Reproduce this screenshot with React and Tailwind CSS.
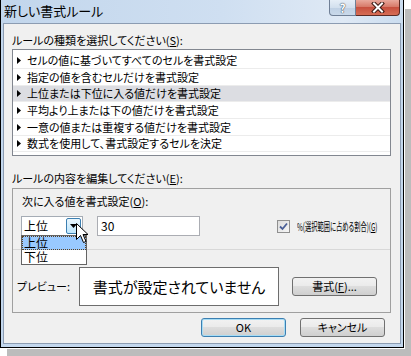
const rules = [
  { text: 'セルの値に基づいてすべてのセルを書式設定', h: 'h-[17px]', on: false },
  { text: '指定の値を含むセルだけを書式設定', h: 'h-[17px]', on: false },
  { text: '上位または下位に入る値だけを書式設定', h: 'h-[16px]', on: true },
  { text: '平均より上または下の値だけを書式設定', h: 'h-[17px]', on: false },
  { text: '一意の値または重複する値だけを書式設定', h: 'h-[17px]', on: false },
  { text: '数式を使用して、書式設定するセルを決定', h: 'h-[16px]', on: false },
];

const btn =
  'h-[19px] w-[85px] shrink-0 rounded-[3px] border flex items-center justify-center text-[11px] leading-none bg-[linear-gradient(#f2f2f2_0%,#ebebeb_45%,#dddddd_50%,#cfcfcf_100%)]';

function TitleBar() {
  return (
    <div className="h-[23px] flex justify-between items-start bg-[linear-gradient(90deg,#c2d6ec_0%,#cfdff1_55%,#dfe9f5_85%,#cadcef_100%)]">
      <div className="pl-[3px] pt-[3px] text-[13px] leading-[16px]">新しい書式ルール</div>
      <div className="flex mr-[3px]">
        <div className="w-[27px] h-[16px] border border-t-0 border-[#6f7f96] rounded-bl-[4px] bg-[linear-gradient(#e6eef7_0%,#d3e0ee_50%,#bfd0e4_51%,#c9d9ea_100%)] flex items-center justify-center text-white text-[12px] font-bold leading-none [text-shadow:0_0_1px_#2a3a4c,0_0_1px_#2a3a4c]">
          ?
        </div>
        <div className="w-[44px] h-[16px] border border-t-0 border-l-0 border-[#5b2a24] rounded-br-[4px] bg-[linear-gradient(#e9a99d_0%,#d77a69_45%,#c7503f_50%,#d66d55_100%)] flex items-center justify-center">
          <svg width="14" height="11" viewBox="0 0 14 11">
            <path d="M3 1.5 L11 9.5 M11 1.5 L3 9.5" stroke="#3a1a14" strokeWidth="4" strokeLinecap="square" />
            <path d="M3 1.5 L11 9.5 M11 1.5 L3 9.5" stroke="#ffffff" strokeWidth="2" strokeLinecap="square" />
          </svg>
        </div>
      </div>
    </div>
  );
}

function Arrow() {
  return (
    <svg width="4" height="7" viewBox="0 0 4 7" className="shrink-0">
      <path d="M0 0 L4 3.5 L0 7 Z" fill="#000" />
    </svg>
  );
}

function Cursor() {
  return (
    <svg width="13" height="21" viewBox="0 0 13 21" className="absolute left-[54px] top-[6px]">
      <path
        d="M0.5 0.5 L0.5 16.5 L4.5 12.5 L7.5 19.5 L10 18.5 L7 11.5 L12 11.5 Z"
        fill="#fff"
        stroke="#000"
        strokeWidth="1"
        strokeLinejoin="miter"
      />
    </svg>
  );
}

export default function App() {
  return (
    <div className="w-[411px] h-[356px] overflow-hidden bg-white font-['Noto_Sans_CJK_JP',sans-serif] text-[11px] text-black [font-feature-settings:'palt']">
      <div className="w-[404px] h-[348px] border-x border-b border-black bg-[#c3d7ed] flex flex-col shadow-[0_0_0_1px_#ffffff,7px_9px_0_0_#bcbcbc]">
        <TitleBar />
        <div className="flex-1 mx-[2px] mb-[3px] border border-[#8c9cb2] bg-[#f0f0f0] pl-[8px] pr-[9px] pt-[8px] flex flex-col">
          <div className="h-[16px] leading-[16px]">
            ルールの種類を選択してください(<span className="underline">S</span>):
          </div>
          <div className="mt-[1px] h-[107px] border border-[#828790] bg-white pt-[2px]">
            {rules.map((r) => (
              <div
                key={r.text}
                className={`${r.h} flex items-center gap-[6px] pl-[4px] border-b border-[#ececec] ${r.on ? 'bg-[#dcdde2]' : ''}`}
              >
                <Arrow />
                <span className="leading-none">{r.text}</span>
              </div>
            ))}
          </div>
          <div className="mt-[14px] h-[16px] leading-[16px]">
            ルールの内容を編集してください(<span className="underline">E</span>):
          </div>
          <div className="mt-[2px] h-[125px] border border-[#a0a0a0] pt-[4px] flex flex-col">
            <div className="h-[16px] leading-[16px] pl-[9px]">
              次に入る値を書式設定(<span className="underline">O</span>):
            </div>
            <div className="mt-[7px] h-[20px] flex items-center pl-[8px] text-[12px]">
              <div className="relative shrink-0 w-[62px] h-[20px] border border-[#a5acb5] bg-white flex items-center justify-between">
                <span className="pl-[2px] leading-none">上位</span>
                <div className="w-[15px] h-[16px] mr-[1px] border border-[#3c7fb1] rounded-[2px] bg-[linear-gradient(#eaf6fd,#bee6fd)] flex items-center justify-center">
                  <svg width="7" height="4" viewBox="0 0 7 4">
                    <path d="M0 0 L7 0 L3.5 4 Z" fill="#000" />
                  </svg>
                </div>
                <div className="absolute left-[-1px] top-[18px] w-[66px] h-[30px] border border-[#646464] bg-white z-10 flex flex-col">
                  <div className="h-[14px] bg-[#99c9ff] border border-dotted border-[#5a4020] flex items-center pl-[1px] leading-none">
                    上位
                  </div>
                  <div className="h-[14px] flex items-center pl-[2px] leading-none">下位</div>
                </div>
                <div className="absolute left-0 top-0 z-20">
                  <Cursor />
                </div>
              </div>
              <div className="ml-[14px] shrink-0 w-[103px] h-[20px] border border-[#abadb3] bg-white flex items-center pl-[3px] leading-none">
                30
              </div>
              <div className="ml-[77px] w-[13px] h-[13px] shrink-0 border border-[#8f8f8f] bg-[linear-gradient(135deg,#dcdcdc,#f6f6f6)] flex items-center justify-center">
                <svg width="9" height="9" viewBox="0 0 9 9">
                  <path d="M1 4.5 L3.5 7 L8 1.5" stroke="#4a5f97" strokeWidth="1.8" fill="none" />
                </svg>
              </div>
              <div className="ml-[7px] w-[84px] shrink-0 whitespace-nowrap overflow-hidden">
                <span className="inline-block origin-left scale-x-[0.57] text-[11px] leading-none">
                  %(選択範囲に占める割合)(<span className="underline">G</span>)
                </span>
              </div>
            </div>
            <div className="mt-[13px] h-px bg-[#d8d8d8]"></div>
            <div className="mt-[17px] flex items-center pl-[4px]">
              <span className="w-[62px] leading-none">プレビュー:</span>
              <div className="w-[200px] h-[39px] border border-[#6d6d6d] bg-white flex items-center justify-center text-[15px] leading-none">
                書式が設定されていません
              </div>
              <div className={`${btn} ml-[13px] border-[#707070]`}>
                書式(<span className="underline">F</span>)...
              </div>
            </div>
          </div>
          <div className="mt-[5px] flex justify-end gap-[14px] pr-[6px]">
            <div className={`${btn} border-[#3c7fb1] shadow-[inset_0_0_0_1px_#a6dcf5]`}>OK</div>
            <div className={`${btn} border-[#707070]`}>キャンセル</div>
          </div>
        </div>
      </div>
    </div>
  );
}
